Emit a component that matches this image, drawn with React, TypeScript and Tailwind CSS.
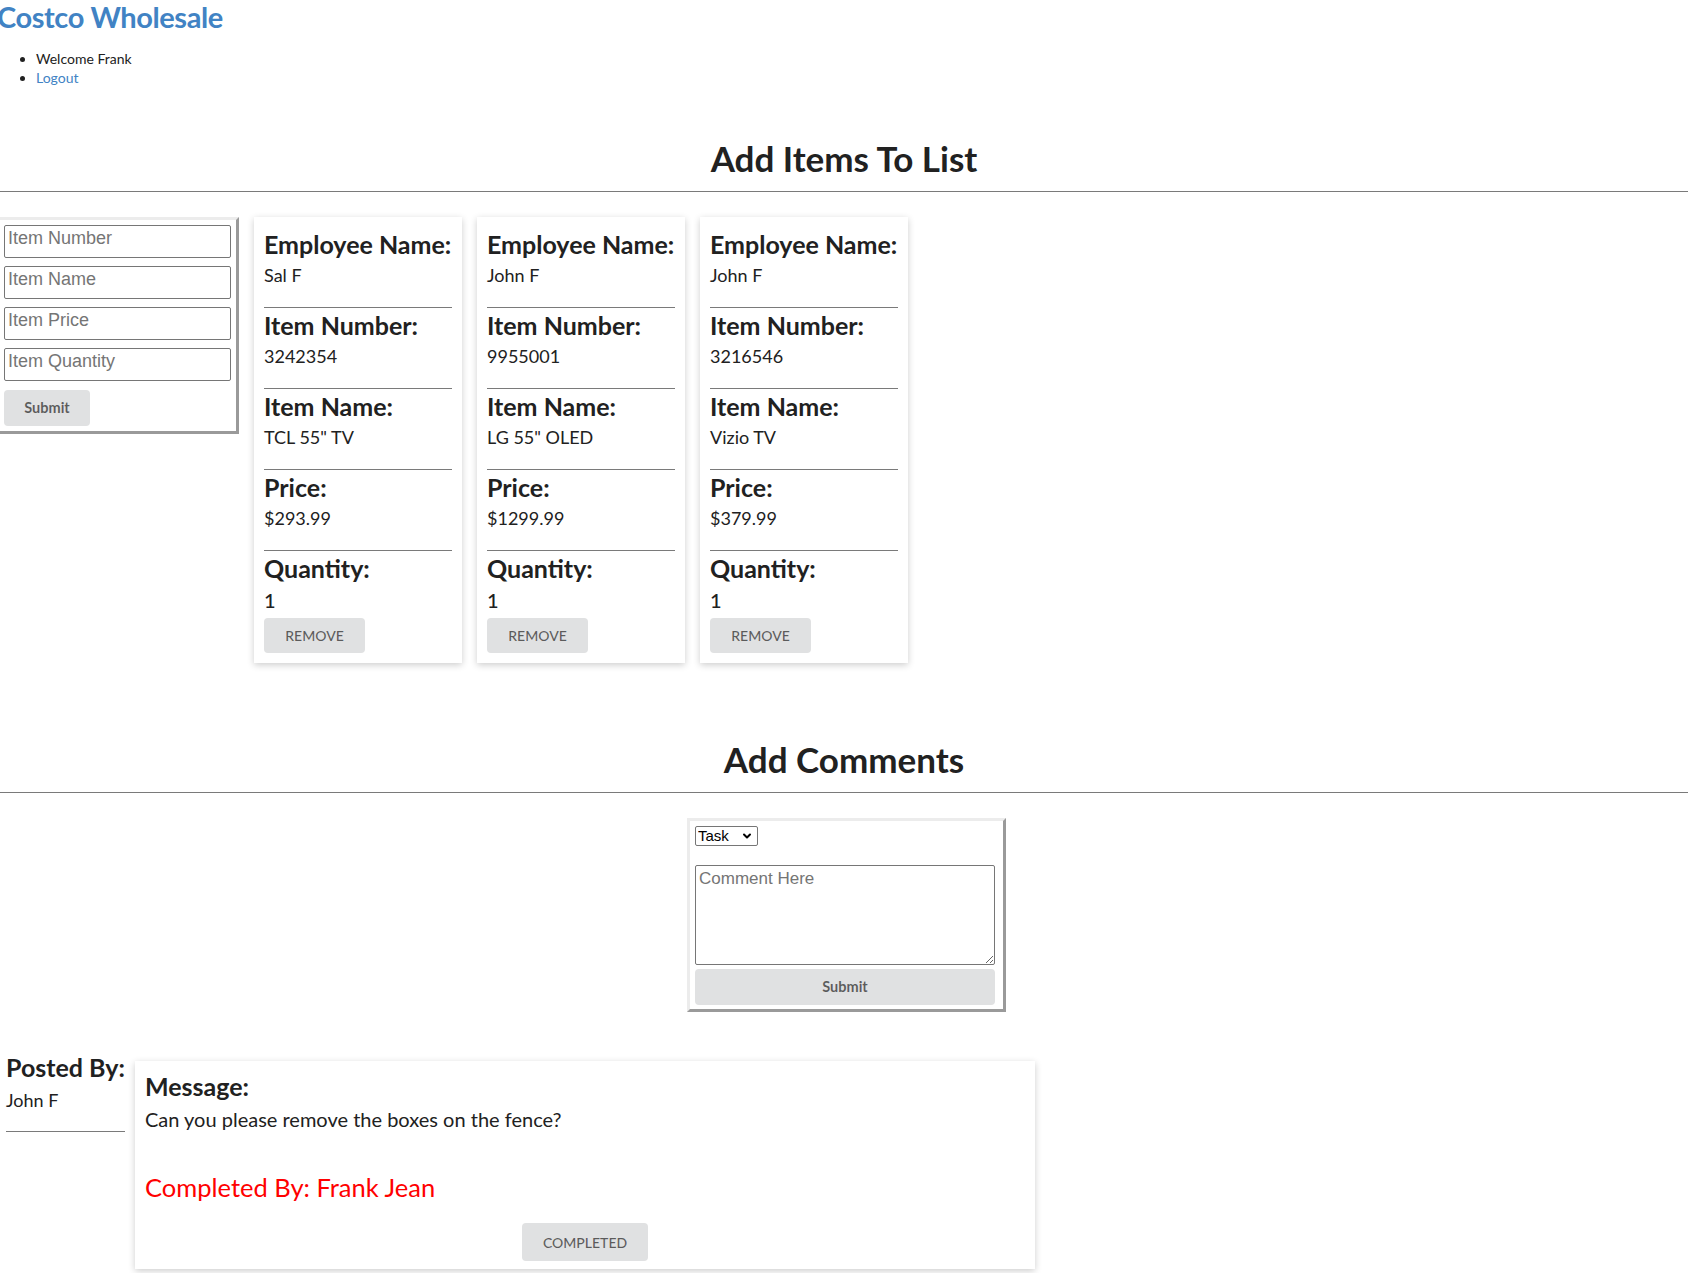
import React from "react";
import { ChevronDown } from "lucide-react";

const items = [
  { employee: "Sal F", number: "3242354", name: 'TCL 55" TV', price: "$293.99", qty: "1" },
  { employee: "John F", number: "9955001", name: 'LG 55" OLED', price: "$1299.99", qty: "1" },
  { employee: "John F", number: "3216546", name: "Vizio TV", price: "$379.99", qty: "1" },
];

const Field = ({ label, value, first }: { label: string; value: string; first?: boolean }) => {
  return (
    <div className={first ? "" : "border-t border-[#7a7a7a]"}>
      <h3 className={`text-[25px] font-bold leading-[29px] ${first ? "" : "mt-[3px]"}`}>{label}</h3>
      <p className="mt-[4px] mb-[19px] text-[18px] leading-[25px]">{value}</p>
    </div>
  );
};

const ItemCard = ({ item }: { item: (typeof items)[number] }) => {
  return (
    <div className="w-[208px] bg-white px-[10px] pt-[13px] pb-[10px] shadow-[0_2px_7px_rgba(0,0,0,0.2)]">
      <Field label="Employee Name:" value={item.employee} first />
      <Field label="Item Number:" value={item.number} />
      <Field label="Item Name:" value={item.name} />
      <Field label="Price:" value={item.price} />
      <div className="border-t border-[#7a7a7a]">
        <h3 className="mt-[3px] text-[25px] font-bold leading-[29px]">Quantity:</h3>
        <p className="mt-[4px] text-[20px] font-medium leading-[26px]">{item.qty}</p>
      </div>
      <button className="mt-[5px] h-[35px] w-[101px] rounded-[4px] bg-[#e0e1e2] text-[14px] font-medium text-black/60">
        REMOVE
      </button>
    </div>
  );
};

const inputCls =
  "block h-[33px] w-[227px] rounded-[2px] border border-[#767676] bg-white px-[3px] pt-[1px] pb-[8px] font-['Liberation_Sans',Arial,sans-serif] text-[18px] leading-normal placeholder:text-[#757575]";

export default function App() {
  return (
    <div className="min-h-screen w-full overflow-hidden bg-white font-['Lato',sans-serif] text-[#212121]">
      <h1 className="-ml-[3px] text-[29px] font-bold leading-[34px] tracking-[-0.4px] text-[#4183c4]">
        Costco Wholesale
      </h1>

      <ul className="mt-[15px] list-disc pl-[36px] text-[14px] leading-[19px]">
        <li>Welcome Frank</li>
        <li>
          <a className="text-[#4183c4]">Logout</a>
        </li>
      </ul>

      <h2 className="mt-[58px] text-center text-[35px] font-bold leading-[27px]">Add Items To List</h2>
      <hr className="mt-[19px] border-t border-[#7a7a7a]" />

      <div className="mt-[25px] flex items-start gap-[15px]">
        <form className="-ml-[4px] flex w-[243px] flex-col gap-[8px] border-[3px] border-t-[#ececec] border-l-[#ececec] border-r-[#9a9a9a] border-b-[#9a9a9a] p-[5px]">
          <input className={inputCls} placeholder="Item Number" />
          <input className={inputCls} placeholder="Item Name" />
          <input className={inputCls} placeholder="Item Price" />
          <input className={inputCls} placeholder="Item Quantity" />
          <button
            type="button"
            className="mt-[1px] h-[36px] w-[86px] rounded-[4px] bg-[#e0e1e2] text-[14.5px] font-bold text-black/60"
          >
            Submit
          </button>
        </form>

        {items.map((item, i) => (
          <ItemCard key={i} item={item} />
        ))}
      </div>

      <h2 className="mt-[83px] text-center text-[35px] font-bold leading-[27px]">Add Comments</h2>
      <hr className="mt-[19px] border-t border-[#7a7a7a]" />

      <div className="mt-[25px] flex justify-center pl-[5px]">
        <div className="w-[319px] border-[3px] border-t-[#ececec] border-l-[#ececec] border-r-[#9a9a9a] border-b-[#9a9a9a] pt-[5px] pr-[8px] pb-[4px] pl-[5px]">
          <div className="relative h-[20px] w-[63px]">
            <select className="block h-[20px] w-[63px] appearance-none rounded-[2px] border border-[#767676] bg-white pl-[2px] font-['Liberation_Sans',Arial,sans-serif] text-[15px] leading-[18px] text-black">
              <option>Task</option>
            </select>
            <ChevronDown
              className="pointer-events-none absolute top-[4px] right-[5px] text-black"
              size={12}
              strokeWidth={4}
            />
          </div>
          <textarea
            className="mt-[19px] block h-[100px] w-[300px] rounded-[2px] border border-[#767676] bg-white px-[3px] py-0 font-['Liberation_Sans',Arial,sans-serif] text-[17px] leading-normal placeholder:text-[#757575]"
            placeholder="Comment Here"
          />
          <button className="mt-[4px] h-[36px] w-[300px] rounded-[4px] bg-[#e0e1e2] text-[14.5px] font-bold text-black/60">
            Submit
          </button>
        </div>
      </div>

      <div className="mt-[41px] flex items-start gap-[10px] pl-[6px]">
        <div className="w-[119px] border-b border-[#7a7a7a] pb-[18px]">
          <h3 className="text-[25px] font-bold leading-[29px]">Posted By:</h3>
          <p className="mt-[6px] text-[18px] leading-[25px]">John F</p>
        </div>

        <div className="mt-[8px] flex w-[900px] flex-col bg-white px-[10px] pt-[11px] pb-[8px] shadow-[0_2px_7px_rgba(0,0,0,0.2)]">
          <h3 className="text-[25px] font-bold leading-[29px]">Message:</h3>
          <p className="mt-[6px] text-[20px] leading-[25px]">Can you please remove the boxes on the fence?</p>
          <p className="mt-[39px] text-[25.5px] leading-[32px] text-[#ff0000]">Completed By: Frank Jean</p>
          <button className="mx-auto mt-[20px] h-[38px] w-[126px] rounded-[4px] bg-[#e0e1e2] text-[14px] font-medium text-black/60">
            COMPLETED
          </button>
        </div>
      </div>
    </div>
  );
}
